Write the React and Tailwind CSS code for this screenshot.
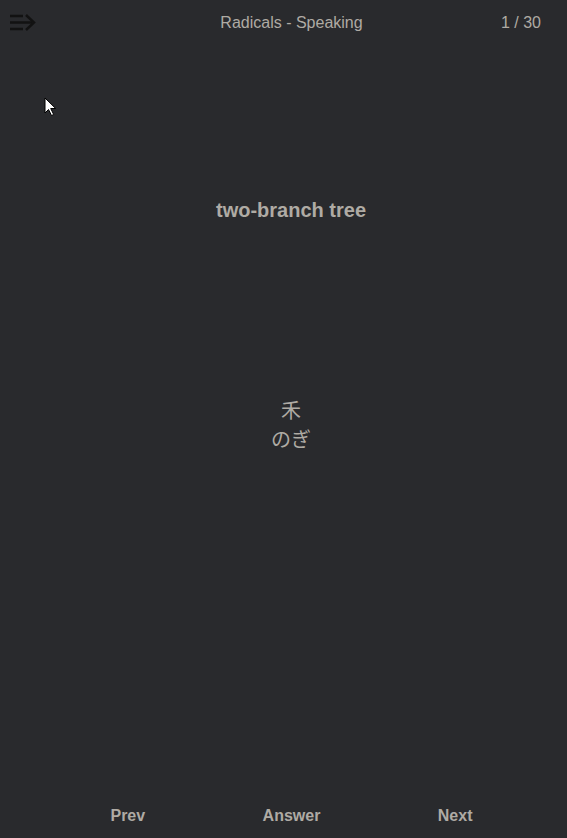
import React from 'react';

const MenuIcon = () => (
  <svg width="28" height="20" viewBox="0 0 28 20" fill="none" stroke="#121212" strokeWidth="2.5">
    <path d="M0 3h13M0 9.5h22M0 16h13" />
    <path d="M16 2l8 7.5-8 7.5" strokeLinejoin="miter" />
  </svg>
);

const Cursor = () => (
  <svg width="14" height="20" viewBox="0 0 14 20" className="absolute left-[44px] top-[97px]">
    <path d="M1 1v15l3.5-3.5 3 6 2.2-1-3-6h5z" fill="#fff" stroke="#000" strokeWidth="1" />
  </svg>
);

export default function App() {
  return (
    <div
      className="relative w-[567px] h-[838px] bg-[#292a2d] text-[#afaba4] flex flex-col overflow-hidden"
      style={{ fontFamily: '"Liberation Sans", Arial, "Noto Sans CJK JP", sans-serif' }}
    >
      <header className="h-[44px] flex items-center pl-[10px] pr-[26px] pt-[1px]">
        <div className="w-[100px] flex items-center">
          <MenuIcon />
        </div>
        <div className="flex-1 text-center text-[16px] pl-[32px] pt-[1px]">Radicals - Speaking</div>
        <div className="w-[100px] text-right text-[16px] pt-[1px]">1 / 30</div>
      </header>

      <main className="flex-1 flex flex-col items-center pl-[15px]">
        <h1 className="mt-[155px] text-[20px] font-bold leading-[22px]">two-branch tree</h1>
        <div className="mt-[176px] flex flex-col items-center text-[20px] leading-[28px]">
          <span>禾</span>
          <span className="mt-[1px]">のぎ</span>
        </div>
      </main>

      <footer className="grid grid-cols-3 ml-[46px] w-[491px] h-[46px] items-center pt-[1px] text-[16px] font-bold">
        <button className="text-center">Prev</button>
        <button className="text-center">Answer</button>
        <button className="text-center">Next</button>
      </footer>

      <Cursor />
    </div>
  );
}
